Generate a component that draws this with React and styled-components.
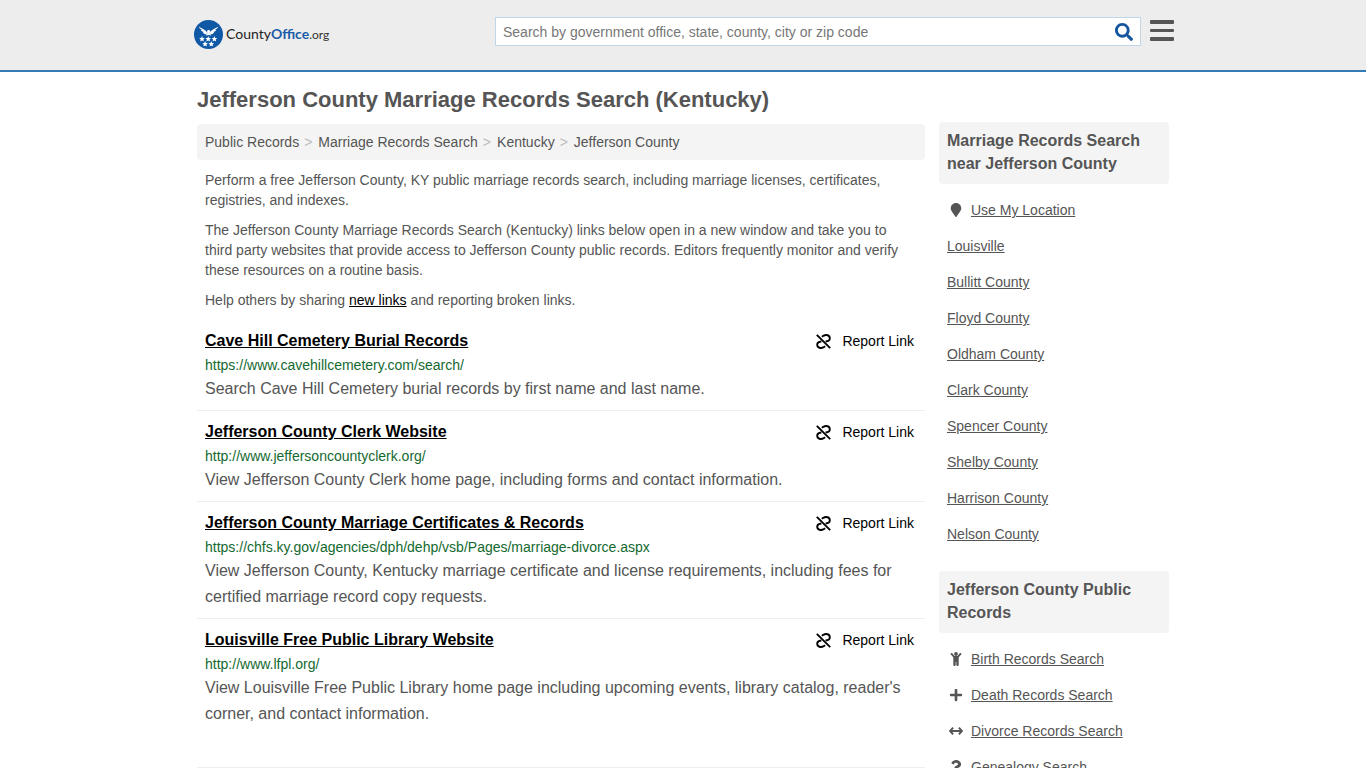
import styled, { createGlobalStyle } from "styled-components";
import { FaSearch, FaMapMarker, FaPlus, FaQuestion } from "react-icons/fa";

const GlobalStyle = createGlobalStyle`
  * {
    box-sizing: border-box;
  }
  body {
    margin: 0;
    background: #fff;
    color: #555;
    font-family: "Liberation Sans", Arial, sans-serif;
    font-size: 14px;
    line-height: 20px;
  }
`;

const Header = styled.header`
  background: #ededed;
  border-bottom: 2px solid #337ab7;
`;

const HeaderInner = styled.div`
  display: flex;
  align-items: flex-start;
  max-width: 982px;
  margin: 0 auto;
  padding: 17px 0 21px;
`;

const Logo = styled.a`
  display: flex;
  align-items: center;
  gap: 3px;
  padding: 3px 0 0 2px;
  color: #222;
  font-family: Lato, "Open Sans", sans-serif;
  font-size: 14px;
  line-height: 20px;
  text-decoration: none;
  svg {
    display: block;
  }
  b {
    color: #1a5ca8;
  }
  small {
    color: #333;
    font-size: 12px;
    font-weight: normal;
  }
`;

const SearchForm = styled.form`
  display: flex;
  flex: 0 1 646px;
  margin-left: auto;
  background: #fff;
  border: 1px solid #bfd5e8;
`;

const SearchInput = styled.input`
  flex: 1;
  min-width: 0;
  height: 27px;
  padding: 0 7px;
  border: 0;
  outline: 0;
  background: transparent;
  color: #555;
  font: inherit;
  &::placeholder {
    color: #777;
    opacity: 1;
  }
`;

const IconButton = styled.button`
  display: flex;
  align-items: center;
  padding: 0;
  border: 0;
  background: none;
  color: ${props => props.color};
  cursor: pointer;
`;

const SearchButton = styled(IconButton)`
  padding: 0 7px;
`;

const MenuButton = styled(IconButton)`
  margin-left: 9px;
  padding-top: 3px;
`;

const Page = styled.div`
  display: grid;
  grid-template-columns: minmax(0, 1fr) 230px;
  column-gap: 14px;
  max-width: 972px;
  margin: 0 auto;
`;

const Title = styled.h1`
  grid-column: 1 / -1;
  margin: 0;
  padding: 16px 0 10px;
  font-size: 22px;
  line-height: 24px;
`;

const Main = styled.main`
  padding-top: 2px;
`;

const Breadcrumb = styled.ol`
  display: flex;
  flex-wrap: wrap;
  margin: 0 0 10px;
  padding: 8px;
  border-radius: 4px;
  background: #f4f4f4;
  list-style: none;
  li + li::before {
    content: ">";
    padding: 0 6px 0 5px;
    color: #bbb;
  }
  a {
    color: #555;
    text-decoration: none;
  }
`;

const Text = styled.p`
  margin: 0 8px 10px;
  a {
    color: #000;
  }
`;

const Results = styled.ul`
  margin: 0 0 32px;
  padding: 0;
  list-style: none;
`;

const Result = styled.li`
  padding: 8px;
  border-bottom: 1px solid #eee;
  &:last-child {
    border-bottom: 0;
  }
`;

const ResultHead = styled.div`
  display: flex;
  justify-content: space-between;
  line-height: 26px;
`;

const ResultLink = styled.a`
  color: #000;
  font-size: 16px;
  font-weight: bold;
`;

const ReportLink = styled.a`
  display: flex;
  align-items: center;
  gap: 11px;
  padding-right: 3px;
  color: #000;
  text-decoration: none;
`;

const Url = styled.div`
  color: #14692f;
  line-height: 22px;
`;

const Desc = styled.div`
  font-size: 16px;
  line-height: 26px;
`;

const More = styled.div`
  height: 40px;
  border-top: 1px solid #eee;
`;

const PanelTitle = styled.h2`
  margin: 0;
  padding: 7px 8px 9px;
  border-radius: 4px;
  background: #f4f4f4;
  font-size: 16px;
  line-height: 23px;
`;

const LinkList = styled.ul`
  margin: 8px 0 19px;
  padding: 0;
  list-style: none;
`;

const LinkItem = styled.li`
  display: flex;
  align-items: center;
  gap: 6px;
  padding: 8px;
  a {
    color: #555;
  }
`;

const LinkIcon = styled.span`
  display: flex;
  justify-content: center;
  width: 18px;
`;

const crumbs = ["Public Records", "Marriage Records Search", "Kentucky", "Jefferson County"];

const results = [
  {
    title: "Cave Hill Cemetery Burial Records",
    url: "https://www.cavehillcemetery.com/search/",
    desc: "Search Cave Hill Cemetery burial records by first name and last name.",
  },
  {
    title: "Jefferson County Clerk Website",
    url: "http://www.jeffersoncountyclerk.org/",
    desc: "View Jefferson County Clerk home page, including forms and contact information.",
  },
  {
    title: "Jefferson County Marriage Certificates & Records",
    url: "https://chfs.ky.gov/agencies/dph/dehp/vsb/Pages/marriage-divorce.aspx",
    desc: "View Jefferson County, Kentucky marriage certificate and license requirements, including fees for certified marriage record copy requests.",
  },
  {
    title: "Louisville Free Public Library Website",
    url: "http://www.lfpl.org/",
    desc: "View Louisville Free Public Library home page including upcoming events, library catalog, reader's corner, and contact information.",
  },
];

const nearby = [
  { name: "Use My Location", icon: <FaMapMarker size={14} /> },
  { name: "Louisville" },
  { name: "Bullitt County" },
  { name: "Floyd County" },
  { name: "Oldham County" },
  { name: "Clark County" },
  { name: "Spencer County" },
  { name: "Shelby County" },
  { name: "Harrison County" },
  { name: "Nelson County" },
];

const publicRecords = [
  { name: "Birth Records Search", icon: <ChildIcon /> },
  { name: "Death Records Search", icon: <FaPlus size={14} /> },
  { name: "Divorce Records Search", icon: <ArrowsIcon /> },
  { name: "Genealogy Search", icon: <FaQuestion size={14} /> },
];

function ChildIcon() {
  return (
    <svg width="14" height="14" viewBox="0 0 14 14" fill="currentColor" aria-hidden="true">
      <circle cx="7" cy="2" r="1.900" />
      <path d="M2.500 1.900L5.200 5H8.800L11.500 1.900" fill="none" stroke="currentColor" strokeWidth="1.900" strokeLinecap="round" strokeLinejoin="round" />
      <path d="M4.300 4.600h5.400V13.100a.8.800 0 0 1-.8.800h-.8a.8.800 0 0 1-.8-.8V10H6.700v3.100a.8.800 0 0 1-.8.800h-.8a.8.800 0 0 1-.8-.8z" />
    </svg>
  );
}

function ArrowsIcon() {
  return (
    <svg width="14" height="14" viewBox="0 0 14 14" fill="none" stroke="currentColor" strokeWidth="1.900" aria-hidden="true">
      <path d="M1 7H13M4.100 3.600L1 7 4.100 10.400M9.900 3.600L13 7 9.900 10.400" />
    </svg>
  );
}

function UnlinkIcon() {
  return (
    <svg width="15" height="15" viewBox="0 0 15 15" fill="none" stroke="currentColor" strokeWidth="1.900" aria-hidden="true">
      <path d="M.8.900L14.200 14.200" />
      <path d="M5.800 2.700L7.300 1.800C10 .300 13.800 1 13.800 4.200C13.800 6.600 12.200 7.300 9.600 7.500" />
      <path d="M5.400 7.500C2.800 7.700 1.200 8.400 1.200 10.800C1.200 14 5 14.700 7.700 13.200L9.200 12.300" />
    </svg>
  );
}

function Star({ x, y }) {
  return (
    <path
      transform={`translate(${x} ${y})`}
      d="M0-2.900L.8-.9 2.900-.8 1.300.5 1.800 2.500 0 1.400-1.800 2.500-1.300.5-2.900-.8-.8-.9z"
    />
  );
}

function LogoMark() {
  return (
    <svg width="29" height="29" viewBox="0 0 29 29" fill="#fff" aria-hidden="true">
      <circle cx="14.500" cy="14.500" r="14.500" fill="#0f58a6" />
      <path d="M4.800 6.800C7 8.500 10.500 8.800 13 12.300L12.700 14.500C10.500 14.300 9.400 13.400 8.800 12.300L10 12.100C8.200 11.700 7.300 11 6.900 10L8.200 10.100C6.300 9.200 5.200 8.200 4.800 6.800z" />
      <path d="M24.200 6.800C22 8.500 18.500 8.800 16 12.300L16.300 14.500C18.500 14.300 19.600 13.400 20.200 12.300L19 12.100C20.800 11.700 21.700 11 22.100 10L20.800 10.100C22.700 9.200 23.800 8.200 24.200 6.800z" />
      <path d="M13.200 10.600L14.900 9.800 16.200 10.900 15.800 13.500 17.300 15.400 14.500 14.900 11.700 15.400 13.200 13.500z" />
      <Star x={8} y={19} />
      <Star x={14.200} y={19} />
      <Star x={20.400} y={19} />
      <Star x={11.100} y={24} />
      <Star x={17.300} y={24} />
    </svg>
  );
}

function Panel({ title, links }) {
  return (
    <section>
      <PanelTitle>{title}</PanelTitle>
      <LinkList>
        {links.map(link => (
          <LinkItem key={link.name}>
            {link.icon && <LinkIcon>{link.icon}</LinkIcon>}
            <a href="#">{link.name}</a>
          </LinkItem>
        ))}
      </LinkList>
    </section>
  );
}

export default function App() {
  return (
    <>
      <GlobalStyle />
      <Header>
        <HeaderInner>
          <Logo href="#">
            <LogoMark />
            <span>County<b>Office</b><small>.org</small></span>
          </Logo>
          <SearchForm onSubmit={ev => ev.preventDefault()}>
            <SearchInput
              type="text"
              aria-label="Search"
              placeholder="Search by government office, state, county, city or zip code"
            />
            <SearchButton type="submit" color="#14559f" aria-label="Submit search">
              <FaSearch size={18} />
            </SearchButton>
          </SearchForm>
          <MenuButton type="button" color="#555" aria-label="Menu">
            <svg width="24" height="21" fill="currentColor">
              <rect width="24" height="4" rx="1" />
              <rect y="9" width="24" height="3" rx="1" />
              <rect y="17" width="24" height="4" rx="1" />
            </svg>
          </MenuButton>
        </HeaderInner>
      </Header>
      <Page>
        <Title>Jefferson County Marriage Records Search (Kentucky)</Title>
        <Main>
          <Breadcrumb>
            {crumbs.map(crumb => (
              <li key={crumb}><a href="#">{crumb}</a></li>
            ))}
          </Breadcrumb>
          <Text>
            Perform a free Jefferson County, KY public marriage records search, including marriage
            licenses, certificates, registries, and indexes.
          </Text>
          <Text>
            The Jefferson County Marriage Records Search (Kentucky) links below open in a new window
            and take you to third party websites that provide access to Jefferson County public
            records. Editors frequently monitor and verify these resources on a routine basis.
          </Text>
          <Text>
            Help others by sharing <a href="#">new links</a> and reporting broken links.
          </Text>
          <Results>
            {results.map(result => (
              <Result key={result.title}>
                <ResultHead>
                  <ResultLink href="#">{result.title}</ResultLink>
                  <ReportLink href="#">
                    <UnlinkIcon />
                    Report Link
                  </ReportLink>
                </ResultHead>
                <Url>{result.url}</Url>
                <Desc>{result.desc}</Desc>
              </Result>
            ))}
          </Results>
          <More />
        </Main>
        <aside>
          <Panel title="Marriage Records Search near Jefferson County" links={nearby} />
          <Panel title="Jefferson County Public Records" links={publicRecords} />
        </aside>
      </Page>
    </>
  );
}
